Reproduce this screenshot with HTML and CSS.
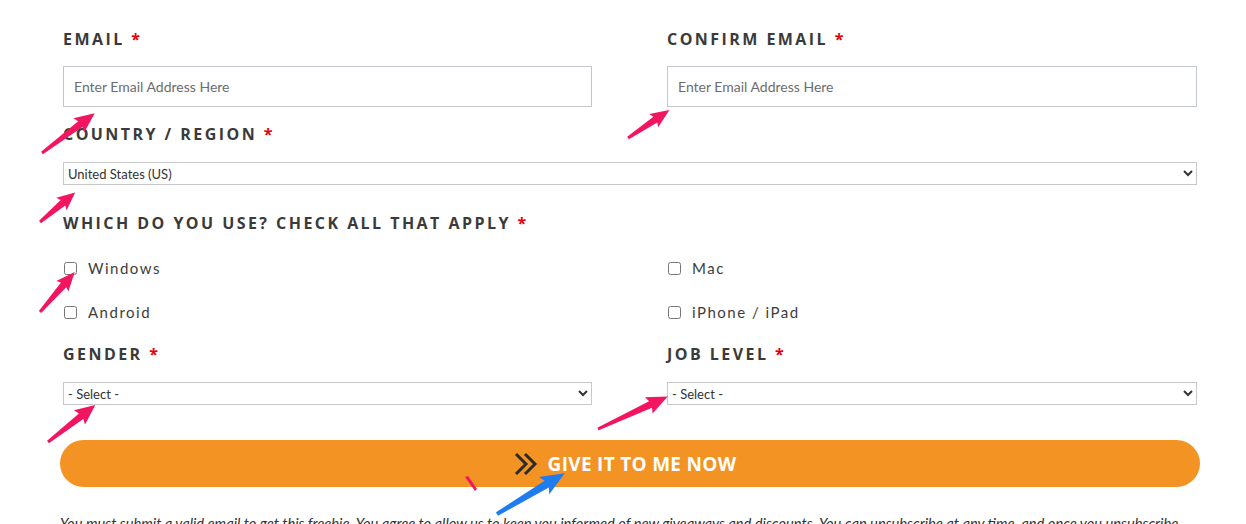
FILE: index.html
```html
<!DOCTYPE html>
<html lang="en">
<head>
  <meta charset="UTF-8">
  <title>Freebie Signup</title>
  <link rel="stylesheet" href="styles.css">
</head>
<body>
  <form class="signup" id="signupForm">
    <div class="row">
      <div class="field">
        <label class="label" for="email">Email <span class="req">*</span></label>
        <input class="text-input" type="email" id="email" placeholder="Enter Email Address Here">
      </div>
      <div class="field">
        <label class="label" for="email2">Confirm Email <span class="req">*</span></label>
        <input class="text-input" type="email" id="email2" placeholder="Enter Email Address Here">
      </div>
    </div>

    <div class="field">
      <label class="label label-tight" for="country">Country / Region <span class="req">*</span></label>
      <select class="select" id="country">
        <option>United States (US)</option>
      </select>
    </div>

    <div class="field field-checks">
      <span class="label">Which do you use? Check all that apply <span class="req">*</span></span>
      <div class="checks">
        <label class="check"><input type="checkbox"> Windows</label>
        <label class="check"><input type="checkbox"> Mac</label>
        <label class="check"><input type="checkbox"> Android</label>
        <label class="check"><input type="checkbox"> iPhone / iPad</label>
      </div>
    </div>

    <div class="row row-selects">
      <div class="field">
        <label class="label label-tight" for="gender">Gender <span class="req">*</span></label>
        <select class="select" id="gender">
          <option>- Select -</option>
          <option>Male</option>
          <option>Female</option>
        </select>
      </div>
      <div class="field">
        <label class="label label-tight" for="job">Job Level <span class="req">*</span></label>
        <select class="select" id="job">
          <option>- Select -</option>
        </select>
      </div>
    </div>

    <button type="submit" class="submit">
      <svg class="chev" width="26" height="24" viewBox="0 0 26 24">
        <path d="M2 2 L12 12 L2 22 M11 2 L21 12 L11 22" fill="none" stroke="#2b2b2b" stroke-width="3"/>
      </svg>
      GIVE IT TO ME NOW
    </button>

    <p class="disclaimer">You must submit a valid email to get this freebie. You agree to allow us to keep you informed of new giveaways and discounts. You can unsubscribe at any time, and once you unsubscribe we will stop sending you any emails about our offers.</p>
  </form>

  <!-- annotation arrows drawn over the screenshot -->
  <svg class="marks" width="1246" height="524" viewBox="0 0 1246 524">
    <g fill="#f3155f">
      <polygon transform="translate(42 153) rotate(-37)" points="0,-1.5 48,-3.5 46,-9 66,0 46,9 48,3.5 0,1.5"/>
      <polygon transform="translate(628 138) rotate(-34)" points="0,-1.5 33,-3.5 31,-8 50,0 31,8 33,3.5 0,1.5"/>
      <polygon transform="translate(40 222) rotate(-40)" points="0,-1.5 30,-3.5 28,-8 46,0 28,8 30,3.5 0,1.5"/>
      <polygon transform="translate(40 312) rotate(-49)" points="0,-1.5 36,-3.5 34,-8 53,0 34,8 36,3.5 0,1.5"/>
      <polygon transform="translate(48 442) rotate(-38)" points="0,-1.5 42,-3.5 40,-9 60,0 40,9 42,3.5 0,1.5"/>
      <polygon transform="translate(598 429) rotate(-25)" points="0,-1.5 58,-3.5 56,-9 77,0 56,9 58,3.5 0,1.5"/>
      <polygon points="465,477 468,476 477,489 475,491"/>
    </g>
    <polygon fill="#1e7bf0" transform="translate(497 514) rotate(-31)" points="0,-2 58,-4 55,-10 79,0 55,10 58,4 0,2"/>
  </svg>
</body>
</html>
```

FILE: styles.css
```css
body {
  margin: 0;
  background: #fff;
  font-family: Lato, "Open Sans", sans-serif;
  color: #333;
  position: relative;
  height: 524px;
  overflow: hidden;
}
.signup {
  width: 1134px;
  margin-left: 63px;
  padding-top: 29px;
}
.row {
  display: grid;
  grid-template-columns: 529px 530px;
  column-gap: 75px;
}
.field {
  display: flex;
  flex-direction: column;
}
.label {
  font-family: "Open Sans", sans-serif;
  font-weight: 700;
  font-size: 16px;
  line-height: 20px;
  letter-spacing: 2.45px;
  text-transform: uppercase;
  color: #3a3a3a;
  margin-bottom: 17px;
}
.label-tight {
  margin-bottom: 18px;
}
.req {
  color: #e5000b;
  letter-spacing: 0;
}
.text-input {
  box-sizing: border-box;
  height: 41px;
  padding: 0 10px;
  border: 1px solid #c3c6ca;
  border-radius: 0;
  font-family: Lato, sans-serif;
  font-size: 14px;
  color: #333;
  margin: 0 0 17px;
}
.text-input::placeholder {
  color: #6d6d6d;
}
.select {
  box-sizing: border-box;
  height: 23px;
  width: 100%;
  border: 1px solid #c8c8c8;
  border-radius: 0;
  background: #fff;
  font-family: Lato, sans-serif;
  font-size: 13px;
  color: #333;
  padding: 0;
  margin: 0;
}
.field-checks {
  margin-top: 28px;
}
.field-checks .label {
  margin-bottom: 13px;
}
.checks {
  display: grid;
  grid-template-columns: 604px 530px;
}
.check {
  display: flex;
  align-items: center;
  height: 44px;
  font-size: 15px;
  letter-spacing: 1.5px;
  color: #3d3d3d;
}
.check input {
  width: 13px;
  height: 13px;
  margin: 0 11px 0 1px;
}
.row-selects {
  margin-top: 10px;
}
.submit {
  display: flex;
  align-items: center;
  justify-content: center;
  gap: 8px;
  width: 1140px;
  height: 47px;
  margin: 35px 0 0 -3px;
  padding: 0 10px 0 0;
  border: none;
  border-radius: 24px;
  background: #f39323;
  color: #fff;
  font-family: "Open Sans", sans-serif;
  font-weight: 700;
  font-size: 19px;
  letter-spacing: 0.3px;
  cursor: pointer;
}
.chev {
  margin-top: 1px;
}
.disclaimer {
  width: 1130px;
  margin: 26px 0 0 -3px;
  font-style: italic;
  font-size: 14.7px;
  line-height: 20px;
  color: #333;
}
.marks {
  position: absolute;
  left: 0;
  top: 0;
  pointer-events: none;
}
```
